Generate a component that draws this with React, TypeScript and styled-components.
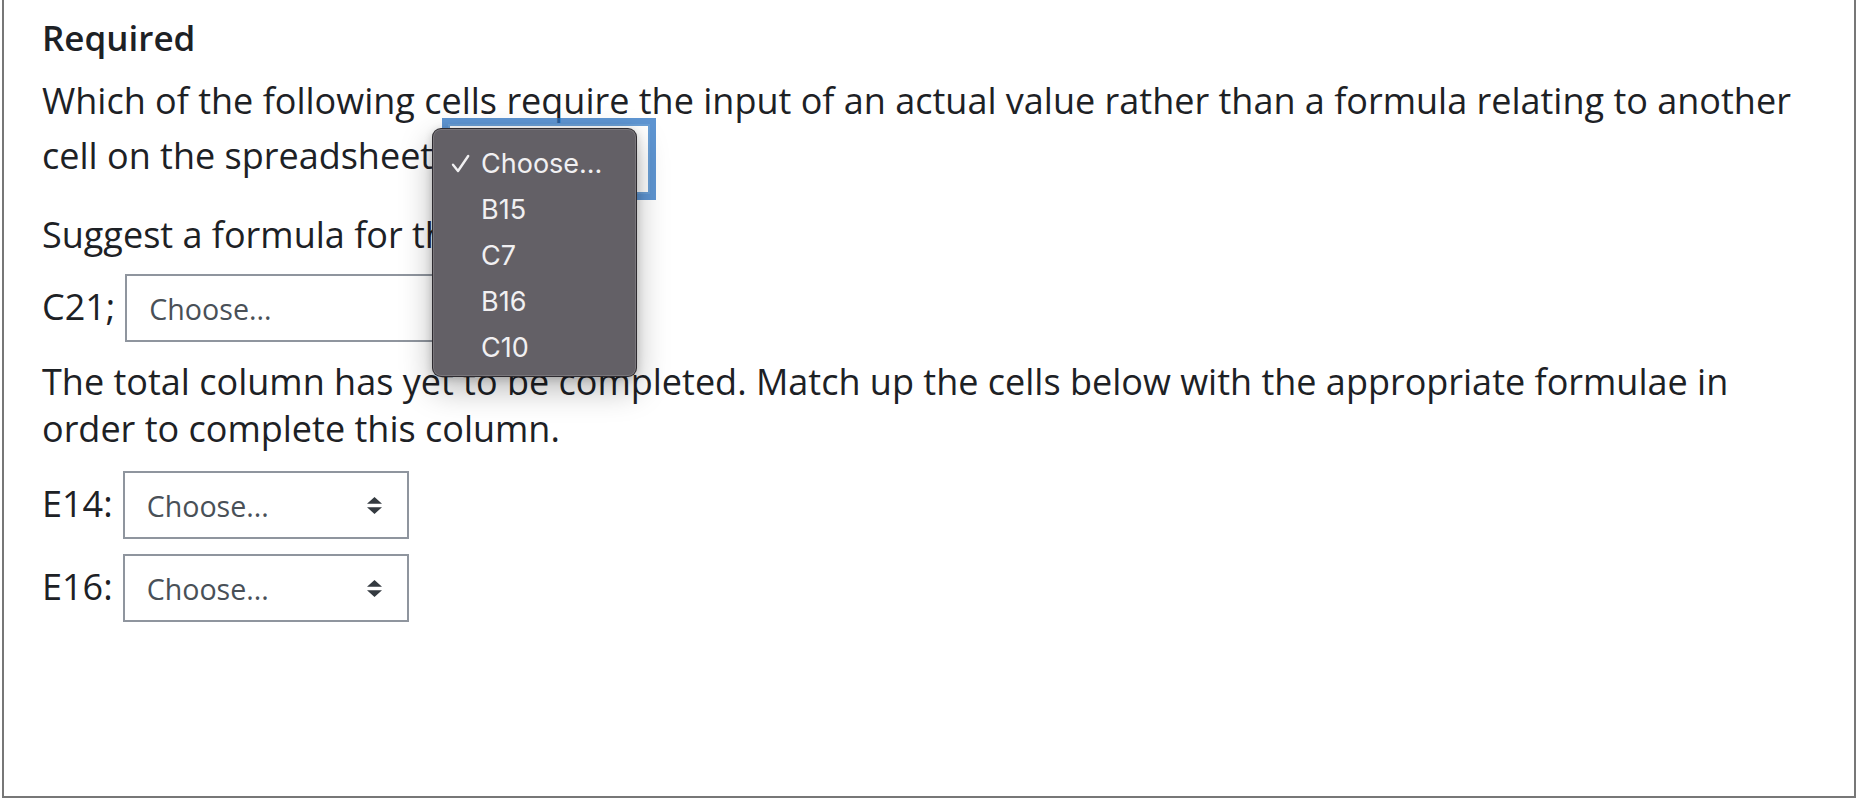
import React from "react";
import styled, { createGlobalStyle, css } from "styled-components";

const GlobalStyle = createGlobalStyle`
  html, body {
    margin: 0;
    padding: 0;
    background: #ffffff;
  }
  body {
    font-family: "Open Sans", "Noto Sans", sans-serif;
    color: #1d2125;
  }
`;

const Card = styled.div`
  position: relative;
  box-sizing: border-box;
  height: 798px;
  margin: 0 8px 0 2px;
  border: 2px solid #777777;
  border-top: 0;
  padding: 0 40px 0 38px;
  display: flex;
  flex-direction: column;
`;

const Heading = styled.h3`
  margin: 17px 0 0;
  font-size: 35px;
  line-height: 42px;
  font-weight: 600;
  color: #1d2125;
`;

const Text = styled.p<{ $mt: number }>`
  margin: ${(p) => p.$mt}px 0 0;
  font-size: 36px;
  line-height: 47px;
  color: #1d2125;
`;

const Row = styled.div<{ $mt: number }>`
  display: flex;
  align-items: baseline;
  gap: 10px;
  margin-top: ${(p) => p.$mt}px;
`;

const Label = styled.span`
  font-size: 36px;
  line-height: 47px;
  color: #1d2125;
`;

const SelectBox = styled.div<{ $width: number; $focused?: boolean }>`
  box-sizing: border-box;
  display: inline-flex;
  align-items: center;
  justify-content: space-between;
  width: ${(p) => p.$width}px;
  height: 68px;
  padding: 0 25px 0 22px;
  border: 2px solid #8f959e;
  background: #ffffff;
  font-size: 28.6px;
  line-height: 45px;
  color: #495057;
  vertical-align: middle;
  ${(p) =>
    p.$focused &&
    css`
      height: 70px;
      margin-left: 5px;
      border-color: #6a9fd6;
      box-shadow: 0 0 0 6px rgba(40, 114, 195, 0.75);
    `}
`;

const Arrow = styled.svg`
  flex: none;
  width: 15px;
  height: 17px;
`;

const Menu = styled.div`
  position: absolute;
  left: 428px;
  top: 128px;
  box-sizing: border-box;
  width: 205px;
  height: 249px;
  padding: 11px 0 0;
  border-radius: 9px;
  border: 1px solid rgba(40, 38, 42, 0.9);
  background: #636066;
  box-shadow: inset 0 0 0 1px rgba(255, 255, 255, 0.14),
    0 12px 32px rgba(0, 0, 0, 0.28), 0 2px 8px rgba(0, 0, 0, 0.18);
  z-index: 5;
`;

const MenuItem = styled.div`
  display: grid;
  grid-template-columns: 48px 1fr;
  align-items: center;
  height: 46px;
  font-family: Inter, "Liberation Sans", sans-serif;
  font-size: 27px;
  color: #f1f0f2;
`;

const Check = styled.svg`
  width: 19px;
  height: 19px;
  margin-left: 18px;
`;

function Select({ width, focused }: { width: number; focused?: boolean }) {
  return (
    <SelectBox $width={width} $focused={focused}>
      <span>Choose...</span>
      <Arrow viewBox="0 0 4 5" preserveAspectRatio="none">
        <path d="M2 0L0 2h4zm0 5L0 3h4z" fill="#343a40" />
      </Arrow>
    </SelectBox>
  );
}

const options = ["Choose...", "B15", "C7", "B16", "C10"];

export default function App() {
  return (
    <>
      <GlobalStyle />
      <Card>
        <Heading>Required</Heading>
        <Text $mt={18}>
          Which of the following cells require the input of an actual value
          rather than a formula relating to another cell on the spreadsheet{" "}
          <Select width={202} focused />
        </Text>
        <Text $mt={17}>Suggest a formula for this cell.</Text>
        <Row $mt={16}>
          <Label>C21;</Label>
          <Select width={420} />
        </Row>
        <Text $mt={16}>
          The total column has yet to be completed. Match up the cells below
          with the appropriate formulae in order to complete this column.
        </Text>
        <Row $mt={19}>
          <Label>E14:</Label>
          <Select width={286} />
        </Row>
        <Row $mt={15}>
          <Label>E16:</Label>
          <Select width={286} />
        </Row>
        <Menu>
          {options.map((o, i) => (
            <MenuItem key={o}>
              {i === 0 ? (
                <Check viewBox="0 0 19 19">
                  <path
                    d="M2 10.8 L7 17 L17.2 2"
                    fill="none"
                    stroke="#f1f0f2"
                    strokeWidth="2.4"
                    strokeLinecap="round"
                    strokeLinejoin="round"
                  />
                </Check>
              ) : (
                <span />
              )}
              <span>{o}</span>
            </MenuItem>
          ))}
        </Menu>
      </Card>
    </>
  );
}
